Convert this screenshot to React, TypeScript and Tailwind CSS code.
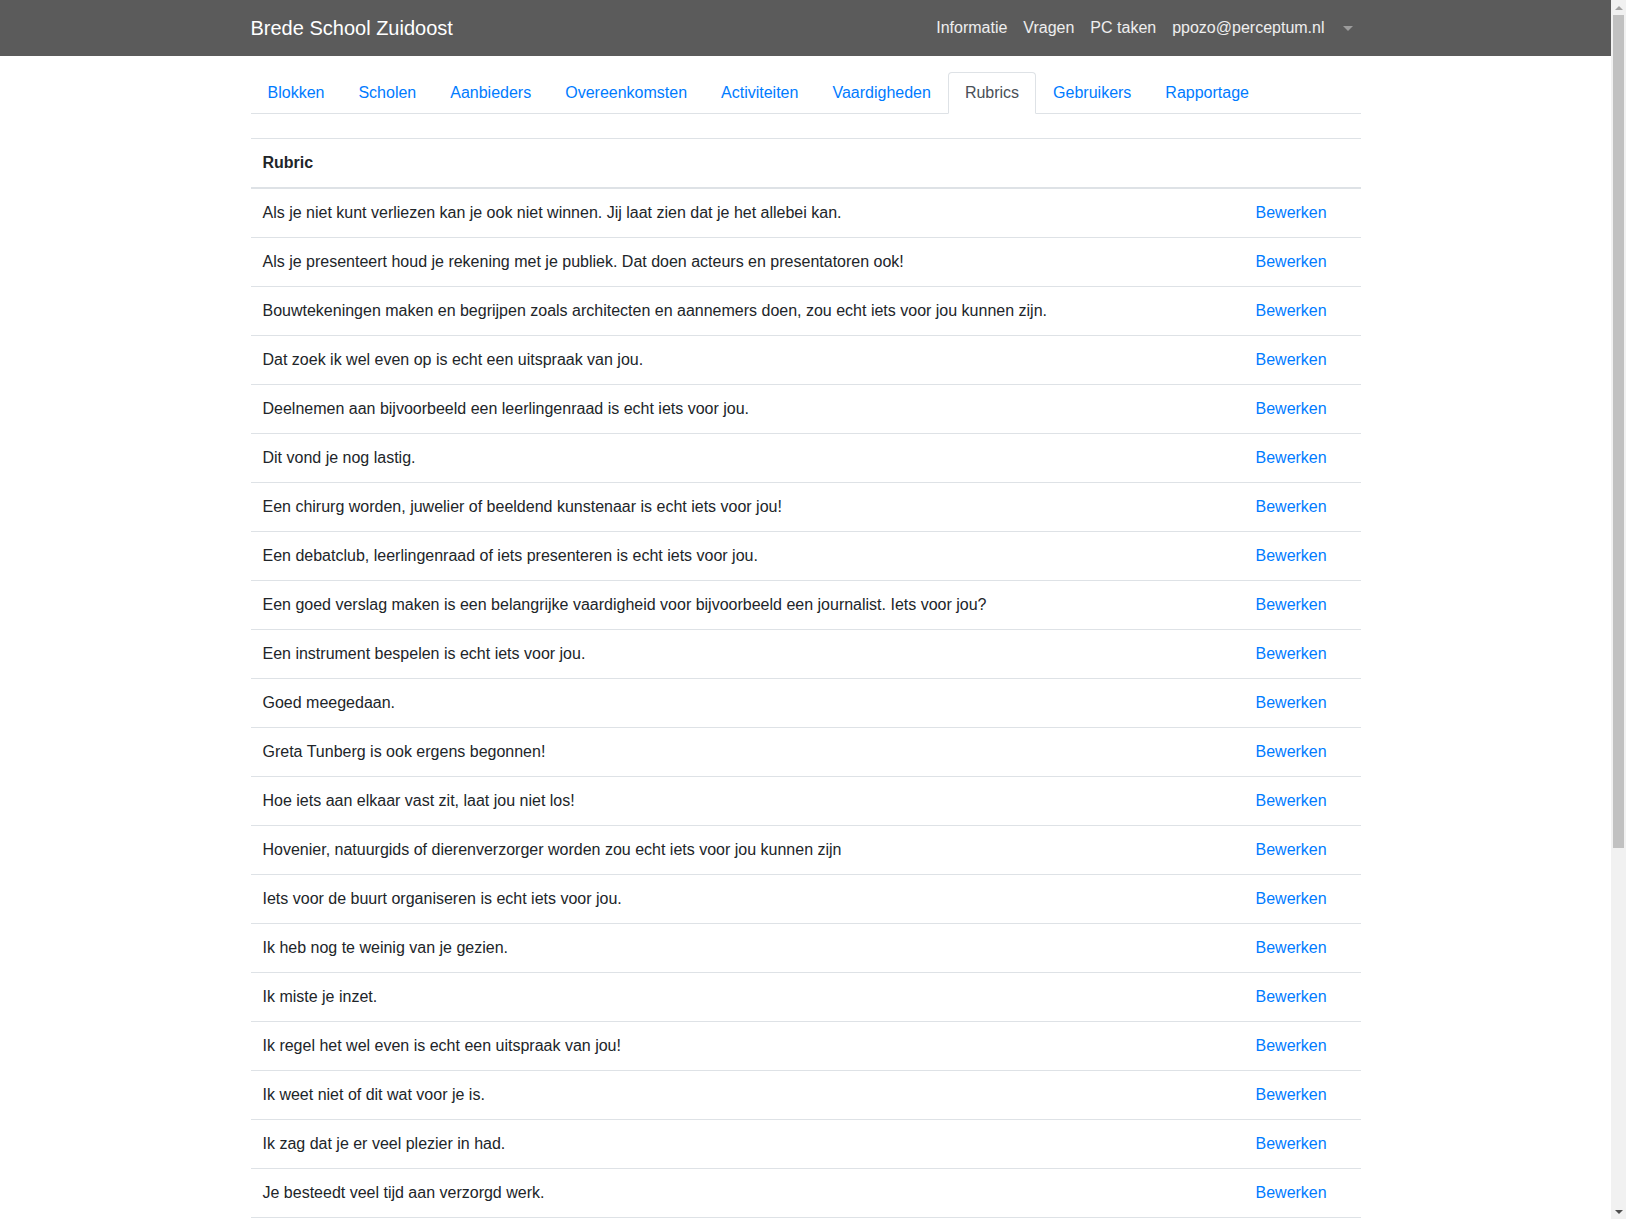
const tabs = [
  'Blokken',
  'Scholen',
  'Aanbieders',
  'Overeenkomsten',
  'Activiteiten',
  'Vaardigheden',
  'Rubrics',
  'Gebruikers',
  'Rapportage',
];

const rubrics = [
  'Als je niet kunt verliezen kan je ook niet winnen. Jij laat zien dat je het allebei kan.',
  'Als je presenteert houd je rekening met je publiek. Dat doen acteurs en presentatoren ook!',
  'Bouwtekeningen maken en begrijpen zoals architecten en aannemers doen, zou echt iets voor jou kunnen zijn.',
  'Dat zoek ik wel even op is echt een uitspraak van jou.',
  'Deelnemen aan bijvoorbeeld een leerlingenraad is echt iets voor jou.',
  'Dit vond je nog lastig.',
  'Een chirurg worden, juwelier of beeldend kunstenaar is echt iets voor jou!',
  'Een debatclub, leerlingenraad of iets presenteren is echt iets voor jou.',
  'Een goed verslag maken is een belangrijke vaardigheid voor bijvoorbeeld een journalist. Iets voor jou?',
  'Een instrument bespelen is echt iets voor jou.',
  'Goed meegedaan.',
  'Greta Tunberg is ook ergens begonnen!',
  'Hoe iets aan elkaar vast zit, laat jou niet los!',
  'Hovenier, natuurgids of dierenverzorger worden zou echt iets voor jou kunnen zijn',
  'Iets voor de buurt organiseren is echt iets voor jou.',
  'Ik heb nog te weinig van je gezien.',
  'Ik miste je inzet.',
  'Ik regel het wel even is echt een uitspraak van jou!',
  'Ik weet niet of dit wat voor je is.',
  'Ik zag dat je er veel plezier in had.',
  'Je besteedt veel tijd aan verzorgd werk.',
  'Je bent een echte doorzetter.',
  'Je hebt goed samengewerkt.',
  'Je kunt goed luisteren naar anderen.',
  'Je werkt nauwkeurig.',
  'Jouw creativiteit valt op.',
  'Knap hoe je dit hebt aangepakt.',
  'Met techniek bezig zijn is echt iets voor jou.',
  'Netjes gewerkt.',
  'Samenwerken gaat je goed af.',
  'Volgende keer beter!',
  'Zorgen voor de natuur is echt iets voor jou.',
];

// window scrollbar as seen in the screenshot
function Scrollbar() {
  return (
    <div className="fixed top-0 right-0 flex h-screen w-[15px] flex-col bg-[#f1f1f1]">
      <div className="flex h-[15px] items-center justify-center">
        <span className="inline-block h-0 w-0 border-x-[4px] border-b-[4px] border-x-transparent border-b-[#a3a3a3]" />
      </div>
      <div className="flex-1 px-[2px]">
        <div className="h-[833px] bg-[#c1c1c1]" />
      </div>
      <div className="flex h-[15px] items-center justify-center">
        <span className="inline-block h-0 w-0 border-x-[4px] border-t-[4px] border-x-transparent border-t-[#505050]" />
      </div>
    </div>
  );
}

export default function App() {
  return (
    <div className="min-h-screen bg-white pr-[15px] font-['Liberation_Sans',Arial,sans-serif] text-base leading-6 text-[#212529]">
      {/* Navbar */}
      <nav className="h-14 bg-[#5b5b5b]">
        <div className="mx-auto flex h-full max-w-[1140px] items-center justify-between px-[15px]">
          <a href="#" className="text-xl leading-[30px] text-white">
            Brede School Zuidoost
          </a>
          <div className="flex items-center">
            {['Informatie', 'Vragen', 'PC taken', 'ppozo@perceptum.nl'].map((item) => (
              <a key={item} href="#" className="px-2 py-2 text-white/90">
                {item}
              </a>
            ))}
            <a href="#" className="flex items-center py-2 pr-2 pl-[10px]">
              <span className="inline-block h-0 w-0 border-x-[5px] border-t-[5px] border-x-transparent border-t-white/40" />
            </a>
          </div>
        </div>
      </nav>

      <div className="mx-auto max-w-[1140px] px-[15px]">
        {/* Tabs */}
        <ul className="mt-4 flex border-b border-[#dee2e6]">
          {tabs.map((tab) => (
            <li key={tab} className="-mb-px">
              {tab === 'Rubrics' ? (
                <a
                  href="#"
                  className="block rounded-t border border-[#dee2e6] border-b-white bg-white px-4 py-2 text-[#495057]"
                >
                  {tab}
                </a>
              ) : (
                <a href="#" className="block rounded-t border border-transparent px-4 py-2 text-[#007bff]">
                  {tab}
                </a>
              )}
            </li>
          ))}
        </ul>

        {/* Table */}
        <table className="mt-6 w-full border-collapse">
          <thead>
            <tr>
              <th className="border-t border-b-2 border-[#dee2e6] p-3 text-left align-bottom font-bold">Rubric</th>
              <th className="w-[117px] border-t border-b-2 border-[#dee2e6] p-3" />
            </tr>
          </thead>
          <tbody>
            {rubrics.map((text) => (
              <tr key={text}>
                <td className="border-b border-[#dee2e6] p-3 align-top">{text}</td>
                <td className="border-b border-[#dee2e6] p-3 align-top">
                  <a href="#" className="text-[#007bff]">
                    Bewerken
                  </a>
                </td>
              </tr>
            ))}
          </tbody>
        </table>
      </div>

      <Scrollbar />
    </div>
  );
}
